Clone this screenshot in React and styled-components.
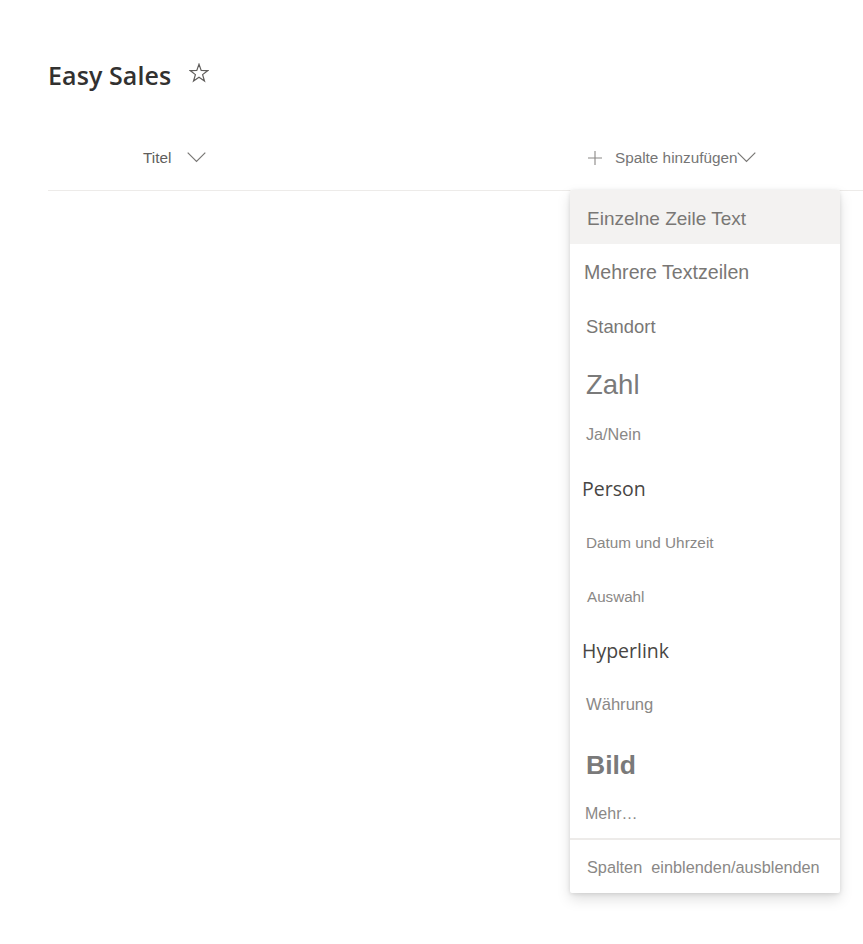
import React from "react";
import styled, { createGlobalStyle } from "styled-components";

const GlobalStyle = createGlobalStyle`
  html, body {
    margin: 0;
    padding: 0;
    background: #ffffff;
  }
  body {
    font-family: "Liberation Sans", Arial, sans-serif;
    overflow: hidden;
  }
`;

// * Page shell
const Page = styled.div`
  position: relative;
  width: 863px;
  height: 944px;
  padding-left: 48px;
  box-sizing: border-box;
`;

const TitleRow = styled.div`
  display: flex;
  align-items: center;
  gap: 18px;
  padding-top: 58px;
  height: 34px;
`;

const ListTitle = styled.h1`
  margin: 0;
  font-family: "Open Sans", "Noto Sans", sans-serif;
  font-size: 25px;
  font-weight: 600;
  color: #323130;
  letter-spacing: 0.1px;
`;

const StarButton = styled.span`
  display: flex;
  color: #605e5c;
  margin-top: -4px;
`;

// * Column header
const HeaderRow = styled.div`
  display: flex;
  align-items: center;
  height: 61px;
  margin-top: 38px;
  padding-bottom: 5px;
  box-sizing: border-box;
  border-bottom: 1px solid #edebe9;
  font-size: 15.3px;
  color: #605e5c;
`;

const TitleCell = styled.div`
  display: flex;
  align-items: center;
  gap: 16px;
  width: 445px;
  padding-left: 95px;
`;

const AddCell = styled.div`
  display: flex;
  align-items: center;
  color: #757575;
`;

const PlusMark = styled.span`
  display: flex;
  margin-right: 13px;
  color: #8a8886;
`;

// * Column type menu
const Menu = styled.div`
  position: absolute;
  left: 570px;
  top: 190px;
  width: 270px;
  background: #ffffff;
  border-radius: 2px;
  box-shadow: 0 6px 14px rgba(0, 0, 0, 0.13), 0 1px 4px rgba(0, 0, 0, 0.11);
  overflow: hidden;
`;

const MenuItem = styled.div`
  display: flex;
  align-items: center;
  height: 54px;
  padding-left: ${p => p.$indent}px;
  padding-top: ${p => 3 + (p.$shift || 0)}px;
  box-sizing: border-box;
  background: ${p => (p.$active ? "#f3f2f1" : "transparent")};
  font-family: ${p =>
    p.$segoe ? '"Open Sans", "Noto Sans", sans-serif' : '"Liberation Sans", Arial, sans-serif'};
  font-size: ${p => p.$size}px;
  font-weight: ${p => (p.$bold ? 700 : 400)};
  color: ${p => p.$color};
  white-space: pre;
`;

const Divider = styled.div`
  height: 2px;
  background: #edebe9;
`;

const MenuFooter = styled.div`
  display: flex;
  align-items: center;
  height: 53px;
  padding-left: 17px;
  padding-top: 2px;
  box-sizing: border-box;
  font-size: 16.3px;
  color: #8a8886;
  white-space: pre;
`;

const columnTypes = [
  { label: "Einzelne Zeile Text", size: 19, color: "#797775", indent: 17, active: true },
  { label: "Mehrere Textzeilen", size: 19.6, color: "#797775", indent: 14 },
  { label: "Standort", size: 18.4, color: "#797775", indent: 16 },
  { label: "Zahl", size: 27.5, color: "#7a7a7a", indent: 16, shift: 8 },
  { label: "Ja/Nein", size: 16.2, color: "#8a8886", indent: 16 },
  { label: "Person", size: 19.5, color: "#484644", indent: 12, segoe: true },
  { label: "Datum und Uhrzeit", size: 15.3, color: "#8a8886", indent: 16 },
  { label: "Auswahl", size: 15.2, color: "#8a8886", indent: 17 },
  { label: "Hyperlink", size: 19.5, color: "#484644", indent: 12, segoe: true },
  { label: "Währung", size: 16.6, color: "#8a8886", indent: 16 },
  { label: "Bild", size: 26.5, color: "#7a7a7a", indent: 16, bold: true, shift: 13 },
  { label: "Mehr…", size: 16, color: "#8a8886", indent: 15, shift: 2 },
];

function Chevron() {
  return (
    <svg width="19" height="11" viewBox="0 0 19 11" fill="none">
      <path d="M0.7 0.7 L9.5 9.5 L18.3 0.7" stroke="#797775" strokeWidth="1.2" />
    </svg>
  );
}

function Star() {
  return (
    <svg width="20" height="20" viewBox="0 0 20 20" fill="none">
      <path
        d="M10 1.2 L12.2 7.4 L18.8 7.6 L13.6 11.6 L15.5 18 L10 14.2 L4.5 18 L6.4 11.6 L1.2 7.6 L7.8 7.4 Z"
        stroke="#605e5c"
        strokeWidth="1.2"
        strokeLinejoin="miter"
      />
    </svg>
  );
}

function Plus() {
  return (
    <svg width="14" height="14" viewBox="0 0 14 14" fill="none">
      <path d="M7 0 V14 M0 7 H14" stroke="#8a8886" strokeWidth="1.1" />
    </svg>
  );
}

export default function App() {
  return (
    <Page>
      <GlobalStyle />
      <TitleRow>
        <ListTitle>Easy Sales</ListTitle>
        <StarButton>
          <Star />
        </StarButton>
      </TitleRow>
      <HeaderRow>
        <TitleCell>
          <span>Titel</span>
          <Chevron />
        </TitleCell>
        <AddCell>
          <PlusMark>
            <Plus />
          </PlusMark>
          <span>Spalte hinzufügen</span>
          <Chevron />
        </AddCell>
      </HeaderRow>
      <Menu>
        {columnTypes.map(t => (
          <MenuItem
            key={t.label}
            $size={t.size}
            $color={t.color}
            $indent={t.indent}
            $active={t.active}
            $segoe={t.segoe}
            $bold={t.bold}
            $shift={t.shift}
          >
            {t.label}
          </MenuItem>
        ))}
        <Divider />
        <MenuFooter>{"Spalten  einblenden/ausblenden"}</MenuFooter>
      </Menu>
    </Page>
  );
}
